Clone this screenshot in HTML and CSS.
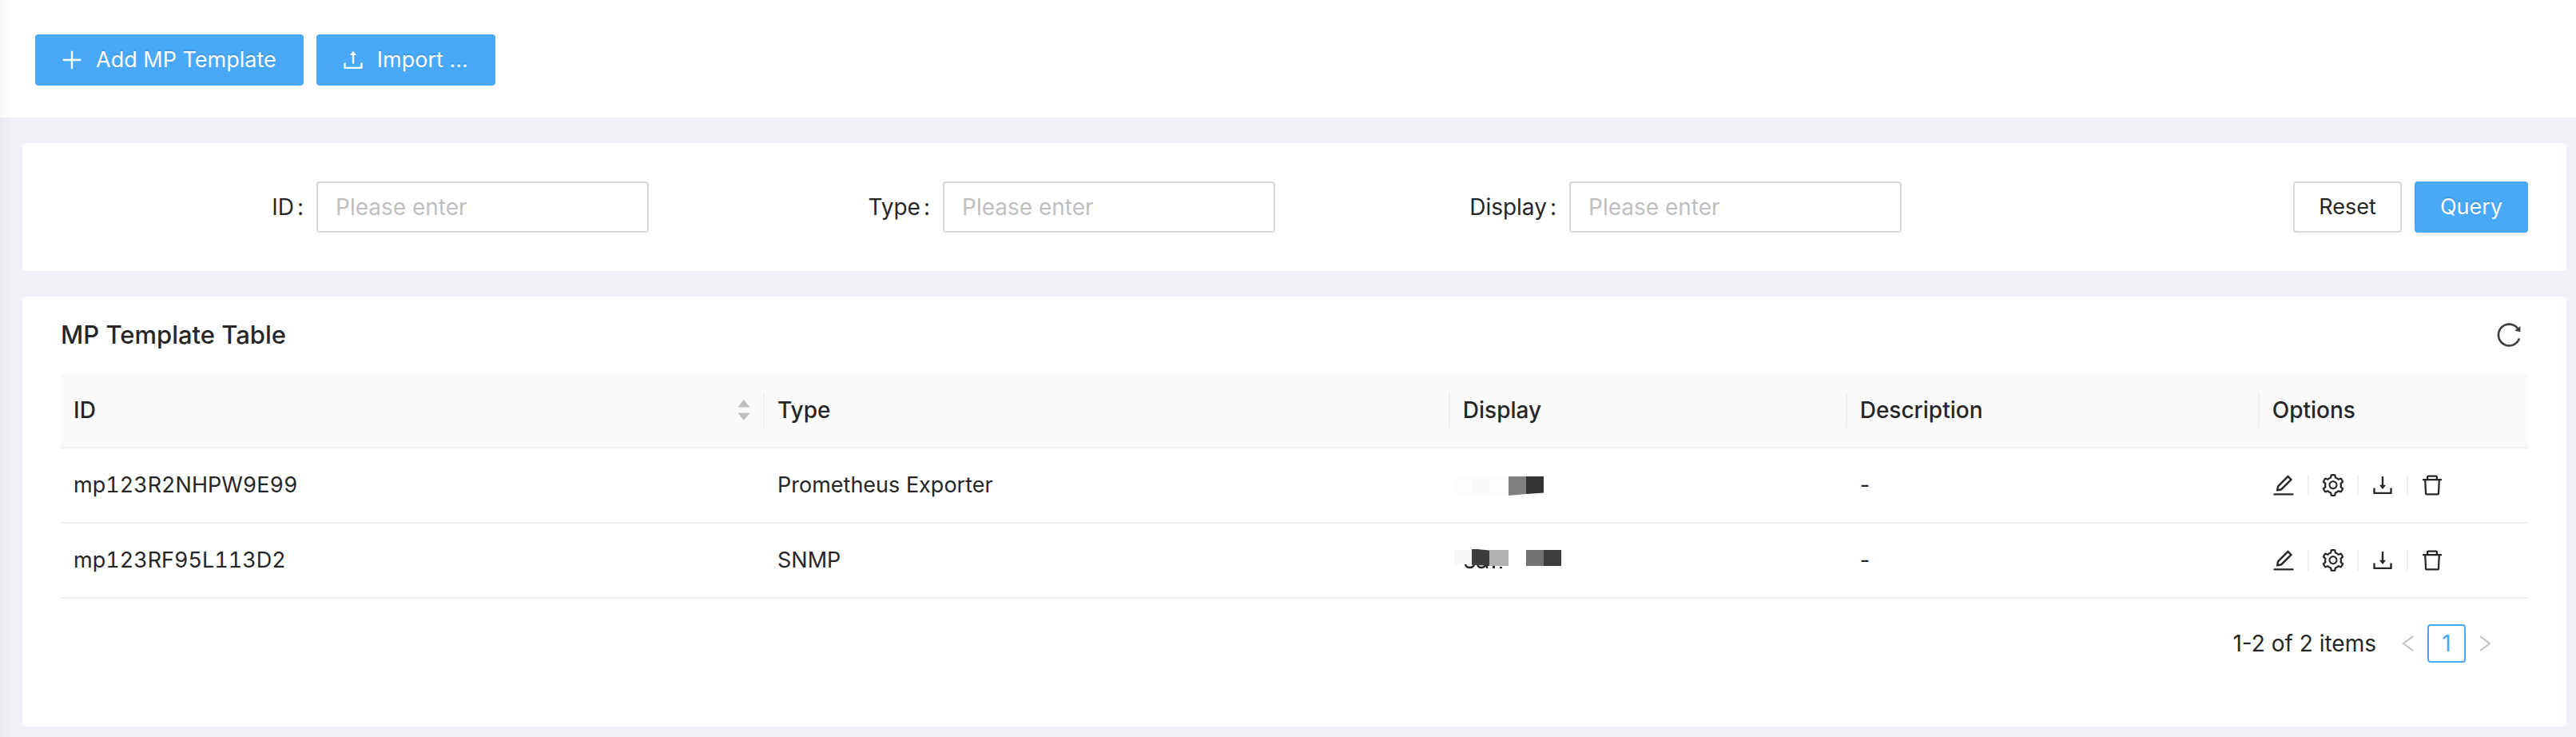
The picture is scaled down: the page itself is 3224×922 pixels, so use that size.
FILE: index.html
```html
<!DOCTYPE html>
<html lang="en">
<head>
<meta charset="utf-8">
<title>MP Template</title>
<link rel="stylesheet" href="styles.css">
</head>
<body>
<svg class="sprite" aria-hidden="true">
  <symbol id="plus" viewBox="0 0 1024 1024"><path d="M482 152h60q8 0 8 8v704q0 8-8 8h-60q-8 0-8-8V160q0-8 8-8z"/><path d="M160 474h704q8 0 8 8v60q0 8-8 8H160q-8 0-8-8v-60q0-8 8-8z"/></symbol>
  <symbol id="upload" viewBox="0 0 1024 1024"><path d="M400 317.7h73.9V656c0 4.4 3.6 8 8 8h60c4.4 0 8-3.6 8-8V317.7H624c6.7 0 10.4-7.7 6.3-12.9L518.3 163a8 8 0 00-12.6 0l-112 141.7c-4.1 5.3-.4 13 6.3 13zM878 626h-60c-4.4 0-8 3.6-8 8v154H214V634c0-4.4-3.6-8-8-8h-60c-4.4 0-8 3.6-8 8v198c0 17.7 14.3 32 32 32h684c17.7 0 32-14.3 32-32V634c0-4.4-3.6-8-8-8z"/></symbol>
  <symbol id="download" viewBox="0 0 1024 1024"><path d="M505.7 661a8 8 0 0012.6 0l112-141.7c4.1-5.2.4-12.9-6.3-12.9h-74.1V168c0-4.4-3.6-8-8-8h-60c-4.4 0-8 3.6-8 8v338.3H400c-6.7 0-10.4 7.7-6.3 12.9l112 141.8zM878 626h-60c-4.4 0-8 3.6-8 8v154H214V634c0-4.4-3.6-8-8-8h-60c-4.4 0-8 3.6-8 8v198c0 17.7 14.3 32 32 32h684c17.7 0 32-14.3 32-32V634c0-4.4-3.6-8-8-8z"/></symbol>
  <symbol id="delete" viewBox="0 0 1024 1024"><path d="M360 184h-8c4.4 0 8-3.6 8-8v8h304v-8c0 4.4 3.6 8 8 8h-8v72h72v-80c0-35.3-28.7-64-64-64H352c-35.3 0-64 28.7-64 64v80h72v-72zm504 72H160c-17.7 0-32 14.3-32 32v32c0 4.4 3.6 8 8 8h60.4l24.7 523c1.6 34.1 29.8 61 63.9 61h454c34.2 0 62.3-26.8 63.9-61l24.7-523H888c4.4 0 8-3.6 8-8v-32c0-17.7-14.3-32-32-32zM731.3 840H292.7l-24.2-512h487l-24.2 512z"/></symbol>
  <symbol id="edit" viewBox="0 0 1024 1024"><path d="M257.7 752c2 0 4-.2 6-.5L431.9 722c2-.4 3.9-1.3 5.3-2.8l423.9-423.9a9.96 9.96 0 000-14.1L694.9 114.9c-1.9-1.9-4.4-2.9-7.1-2.9s-5.2 1-7.1 2.9L256.8 538.8c-1.5 1.5-2.4 3.3-2.8 5.3l-29.5 168.2a33.5 33.5 0 009.4 29.8c6.6 6.4 14.9 9.9 23.8 9.9zm67.4-174.4L687.8 215l73.3 73.3-362.7 362.6-88.9 15.7 15.6-89zM880 836H144c-17.7 0-32 14.3-32 32v36c0 4.4 3.6 8 8 8h784c4.4 0 8-3.6 8-8v-36c0-17.7-14.3-32-32-32z"/></symbol>
  <symbol id="setting" viewBox="0 0 1024 1024"><path d="M924.8 625.7l-65.5-56c3.1-19 4.7-38.4 4.7-57.8s-1.6-38.8-4.7-57.8l65.5-56a32.03 32.03 0 009.3-35.2l-.9-2.6a443.74 443.74 0 00-79.7-137.9l-1.8-2.1a32.12 32.12 0 00-35.1-9.5l-81.3 28.9c-30-24.6-63.5-44-99.7-57.6l-15.7-85a32.05 32.05 0 00-25.8-25.7l-2.7-.5c-52.1-9.4-106.9-9.4-159 0l-2.7.5a32.05 32.05 0 00-25.8 25.7l-15.8 85.4a351.86 351.86 0 00-99 57.4l-81.9-29.1a32 32 0 00-35.1 9.5l-1.8 2.1a446.02 446.02 0 00-79.7 137.9l-.9 2.6c-4.5 12.5-.8 26.5 9.3 35.2l66.3 56.6c-3.1 18.8-4.6 38-4.6 57.1 0 19.2 1.5 38.4 4.6 57.1L99 625.5a32.03 32.03 0 00-9.3 35.2l.9 2.6c18.1 50.4 44.9 96.9 79.7 137.9l1.8 2.1a32.12 32.12 0 0035.1 9.5l81.9-29.1c29.8 24.5 63.1 43.9 99 57.4l15.8 85.4a32.05 32.05 0 0025.8 25.7l2.7.5a449.4 449.4 0 00159 0l2.7-.5a32.05 32.05 0 0025.8-25.7l15.7-85a350 350 0 0099.7-57.6l81.3 28.9a32 32 0 0035.1-9.5l1.8-2.1c34.8-41.1 61.6-87.5 79.7-137.9l.9-2.6c4.5-12.3.8-26.3-9.3-35zM788.3 465.9c2.5 15.1 3.8 30.6 3.8 46.1s-1.3 31-3.8 46.1l-6.6 40.1 74.7 63.9a370.03 370.03 0 01-42.6 73.6L721 702.8l-31.4 25.8c-23.9 19.6-50.5 35-79.3 45.8l-38.1 14.3-17.9 97a377.5 377.5 0 01-85 0l-17.9-97.2-37.8-14.5c-28.5-10.8-55-26.2-78.7-45.7l-31.4-25.9-93.4 33.2c-17-22.9-31.2-47.6-42.6-73.6l75.5-64.5-6.5-40c-2.4-14.9-3.7-30.3-3.7-45.5 0-15.3 1.2-30.6 3.7-45.5l6.5-40-75.5-64.5c11.3-26.1 25.6-50.7 42.6-73.6l93.4 33.2 31.4-25.9c23.7-19.5 50.2-34.9 78.7-45.7l37.9-14.3 17.9-97.2c28.1-3.2 56.8-3.2 85 0l17.9 97 38.1 14.3c28.7 10.8 55.4 26.2 79.3 45.8l31.4 25.8 92.8-32.9c17 22.9 31.2 47.6 42.6 73.6L781.8 426l6.5 39.9zM512 326c-97.2 0-176 78.8-176 176s78.8 176 176 176 176-78.8 176-176-78.8-176-176-176zm79.2 255.2A111.6 111.6 0 01512 614c-29.9 0-58-11.7-79.2-32.8A111.6 111.6 0 01400 502c0-29.9 11.7-58 32.8-79.2C454 401.6 482.1 390 512 390c29.9 0 58 11.6 79.2 32.8A111.6 111.6 0 01624 502c0 29.9-11.7 58-32.8 79.2z"/></symbol>
  <symbol id="reload" viewBox="0 0 1024 1024"><path d="M909.1 209.3l-56.4 44.1C775.8 155.1 656.2 92 521.9 92 290 92 102.3 279.5 102 511.5 101.7 743.7 289.8 932 521.9 932c181.3 0 335.8-115 394.6-276.1 1.5-4.2-.7-8.9-4.9-10.3l-56.7-19.5a8 8 0 00-10.1 4.8c-1.8 5-3.8 10-5.9 14.9-17.3 41-42.1 77.8-73.7 109.4A344.77 344.77 0 01655.9 829c-42.3 17.9-87.4 27-133.8 27-46.5 0-91.5-9.1-133.8-27A341.5 341.5 0 01279 755.2a342.16 342.16 0 01-73.7-109.4c-17.9-42.4-27-87.4-27-133.9s9.1-91.5 27-133.9c17.3-41 42.1-77.8 73.7-109.4 31.6-31.6 68.4-56.4 109.3-73.8 42.3-17.9 87.4-27 133.8-27 46.5 0 91.5 9.1 133.8 27a341.5 341.5 0 01109.3 73.8c9.9 9.9 19.2 20.4 27.8 31.4l-60.2 47a8 8 0 003 14.1l175.6 43c5 1.2 9.9-2.6 9.9-7.7l.8-180.9c-.1-6.6-7.8-10.3-13-6.2z"/></symbol>
</svg>

<header class="toolbar">
  <button class="btn btn-primary" type="button"><svg class="icon" aria-hidden="true"><use href="#plus"/></svg><span>Add MP Template</span></button>
  <button class="btn btn-primary" type="button"><svg class="icon" aria-hidden="true"><use href="#upload"/></svg><span>Import ...</span></button>
</header>

<main class="content">
  <form class="card search">
    <div class="field"><label class="label" for="f-id">ID<span class="colon">:</span></label><input class="input" id="f-id" type="text" placeholder="Please enter"></div>
    <div class="field"><label class="label" for="f-type">Type<span class="colon">:</span></label><input class="input" id="f-type" type="text" placeholder="Please enter"></div>
    <div class="field"><label class="label" for="f-display">Display<span class="colon">:</span></label><input class="input" id="f-display" type="text" placeholder="Please enter"></div>
    <div class="actions">
      <button class="btn raised" type="reset">Reset</button>
      <button class="btn btn-primary raised" type="button">Query</button>
    </div>
  </form>

  <section class="card list">
    <div class="list-head">
      <h1 class="title">MP Template Table</h1>
      <button class="icon-btn reload" type="button" aria-label="Reload"><svg class="icon" aria-hidden="true"><use href="#reload"/></svg></button>
    </div>

    <table class="table">
      <colgroup><col class="c-id"><col class="c-type"><col class="c-display"><col class="c-desc"><col class="c-options"></colgroup>
      <thead>
        <tr>
          <th scope="col"><div class="th"><span>ID</span><svg class="sorter" viewBox="0 0 16 26" aria-hidden="true"><path d="M8 0L15.6 9.6H.4zM8 26L15.6 16.4H.4z"/></svg></div></th>
          <th scope="col"><div class="th">Type</div></th>
          <th scope="col"><div class="th">Display</div></th>
          <th scope="col"><div class="th">Description</div></th>
          <th scope="col"><div class="th">Options</div></th>
        </tr>
      </thead>
      <tbody>
        <tr>
          <td class="code">mp123R2NHPW9E99</td>
          <td>Prometheus Exporter</td>
          <td><svg class="mosaic" viewBox="0 0 136 32" aria-hidden="true">
            <path fill="#fafafa" d="M22 5h22v24H22z"/><path fill="#fdfdfd" d="M0 5h22v24H0zM44 5h24v24H44z"/>
            <path fill="#7f7f7f" d="M68 5h22v22l-22 2z"/><path fill="#333" d="M90 5h22v20.500l-22 1.500z"/></svg></td>
          <td>-</td>
          <td><div class="ops">
            <button class="icon-btn" type="button" aria-label="Edit"><svg class="icon" aria-hidden="true"><use href="#edit"/></svg></button>
            <button class="icon-btn" type="button" aria-label="Settings"><svg class="icon" aria-hidden="true"><use href="#setting"/></svg></button>
            <button class="icon-btn" type="button" aria-label="Download"><svg class="icon" aria-hidden="true"><use href="#download"/></svg></button>
            <button class="icon-btn" type="button" aria-label="Delete"><svg class="icon" aria-hidden="true"><use href="#delete"/></svg></button>
          </div></td>
        </tr>
        <tr>
          <td class="code">mp123RF95L113D2</td>
          <td>SNMP</td>
          <td><svg class="mosaic" viewBox="0 0 136 32" aria-hidden="true">
            <path fill="none" stroke="#262626" stroke-width="2.500" d="M14 21q1 4 5.500 4t5.500-4M29 21q1 4 5 4t6-4M41 21v5"/><path fill="#262626" d="M48 23h3v3h-3zM57 24h3v2h-3z"/>
            <path fill="#f7f7f7" d="M0 3h22v18H0z"/><path fill="#3c3c3c" d="M22 2h7l15 1.500V23l-22-1.500z"/>
            <path fill="#b1b1b1" d="M44 3h24v20H44z"/><path fill="#727272" d="M90 3h22v20H90z"/><path fill="#3e3e3e" d="M112 3h22v20h-22z"/></svg></td>
          <td>-</td>
          <td><div class="ops">
            <button class="icon-btn" type="button" aria-label="Edit"><svg class="icon" aria-hidden="true"><use href="#edit"/></svg></button>
            <button class="icon-btn" type="button" aria-label="Settings"><svg class="icon" aria-hidden="true"><use href="#setting"/></svg></button>
            <button class="icon-btn" type="button" aria-label="Download"><svg class="icon" aria-hidden="true"><use href="#download"/></svg></button>
            <button class="icon-btn" type="button" aria-label="Delete"><svg class="icon" aria-hidden="true"><use href="#delete"/></svg></button>
          </div></td>
        </tr>
      </tbody>
    </table>

    <nav class="pager" aria-label="Pagination">
      <span class="total">1-2 of 2 items</span>
      <button class="page arrow" type="button" disabled aria-label="Previous page"><svg class="chevron" viewBox="0 0 14 20" aria-hidden="true"><path d="M13 1L1 10l12 9"/></svg></button>
      <button class="page current" type="button" aria-current="page">1</button>
      <button class="page arrow" type="button" disabled aria-label="Next page"><svg class="chevron" viewBox="0 0 14 20" aria-hidden="true"><path d="M1 1l12 9-12 9"/></svg></button>
    </nav>
  </section>
</main>
</body>
</html>
```

FILE: styles.css
```css
:root {
  --primary: #48a9f8;
  --text: #262626;
  --muted: #bfbfbf;
  --border: #d9d9d9;
  --line: #f0f0f0;
  --page: #f0f1f6;
}

* {
  box-sizing: border-box;
}

body {
  margin: 0;
  background: var(--page);
  color: var(--text);
  font: 400 28px/44px Inter, "Liberation Sans", sans-serif;
}

body::before {
  content: "";
  position: fixed;
  inset: 0 auto 0 0;
  width: 16px;
  background: linear-gradient(to right, rgba(0, 21, 41, .03), rgba(0, 21, 41, 0));
  pointer-events: none;
}

button,
input {
  font: inherit;
  color: inherit;
}

button {
  cursor: pointer;
}

.sprite {
  display: none;
}

.icon {
  display: block;
  flex: none;
  width: 32px;
  height: 32px;
  fill: currentColor;
}

.btn {
  display: inline-flex;
  align-items: center;
  justify-content: center;
  gap: 14px;
  height: 64px;
  padding: 0 30px;
  border: 2px solid var(--border);
  border-radius: 4px;
  background: #fff;
  font-size: 27px;
  white-space: nowrap;
}

.btn-primary {
  border-color: var(--primary);
  background: var(--primary);
  color: #fff;
  text-shadow: 0 -2px 0 rgba(0, 0, 0, .12);
}

.raised {
  box-shadow: 0 4px 0 rgba(0, 0, 0, .016);
}

.btn-primary.raised {
  box-shadow: 0 4px 0 rgba(0, 0, 0, .045);
}

.toolbar {
  display: flex;
  gap: 16px;
  padding: 43px 44px 40px;
  background: #fff;
}

.toolbar .btn {
  padding: 0 32px 0 28px;
}

.content {
  display: grid;
  gap: 32px;
  padding: 32px 12px 12px 28px;
}

.card {
  border-radius: 4px;
  background: #fff;
}

.search {
  display: grid;
  grid-template-columns: repeat(4, minmax(0, 1fr));
  gap: 48px;
  padding: 48px;
}

.field {
  display: flex;
  align-items: center;
}

.label {
  flex: 0 0 320px;
  text-align: right;
}

.colon {
  margin: 0 16px 0 4px;
}

.input {
  flex: 1;
  min-width: 0;
  height: 64px;
  padding: 0 22px;
  border: 2px solid var(--border);
  border-radius: 4px;
  background: #fff;
}

.input::placeholder {
  color: var(--muted);
  opacity: 1;
}

.actions {
  display: flex;
  justify-content: flex-end;
  gap: 16px;
}

.list {
  padding: 0 48px 80px;
}

.list-head {
  display: flex;
  align-items: center;
  justify-content: space-between;
  padding: 16px 6px 16px 0;
}

.title {
  margin: 0;
  font-size: 31px;
  font-weight: 500;
  line-height: 64px;
}

.icon-btn {
  padding: 0;
  border: 0;
  background: none;
}

.reload .icon {
  width: 36px;
  height: 36px;
  fill: #404040;
}

.table {
  width: 100%;
  table-layout: fixed;
  border-collapse: separate;
  border-spacing: 0;
}

.c-id { width: 28.53%; }
.c-type { width: 27.78%; }
.c-display { width: 16.09%; }
.c-desc { width: 16.71%; }
.c-options { width: 10.89%; }

.table th,
.table td {
  height: 94px;
  padding: 24px 16px;
  border-bottom: 2px solid var(--line);
  text-align: left;
}

.table td {
  font-size: 27px;
}

.table .code {
  font-variant-numeric: tabular-nums;
}

.table th {
  padding: 24px 0;
  background: #fafafa;
  font-weight: 500;
}

.table th:first-child {
  border-top-left-radius: 4px;
}

.table th:last-child {
  border-top-right-radius: 4px;
}

.th {
  display: flex;
  align-items: center;
  justify-content: space-between;
  padding: 0 16px;
  border-right: 2px solid var(--line);
}

.table th:last-child .th {
  border-right: 0;
}

.sorter {
  width: 16px;
  height: 26px;
  fill: var(--muted);
}

.mosaic {
  display: block;
  width: 136px;
  height: 32px;
  margin-left: -11px;
}

.ops {
  display: flex;
  align-items: center;
  margin-left: -2px;
}

.ops .icon-btn + .icon-btn {
  display: flex;
  align-items: center;
}

.ops .icon-btn + .icon-btn::before {
  content: "";
  width: 2px;
  height: 26px;
  margin: 0 14px;
  background: var(--line);
}

.pager {
  display: flex;
  align-items: center;
  justify-content: flex-end;
  padding: 32px 30px 0 0;
}

.total {
  margin-right: 16px;
}

.page {
  display: flex;
  align-items: center;
  justify-content: center;
  width: 48px;
  height: 48px;
  padding: 0;
  border: 2px solid transparent;
  border-radius: 4px;
  background: none;
}

.current {
  border-color: var(--primary);
  color: var(--primary);
}

.arrow {
  color: var(--muted);
  cursor: default;
}

.chevron {
  width: 14px;
  height: 20px;
  fill: none;
  stroke: currentColor;
  stroke-width: 2;
}
```
